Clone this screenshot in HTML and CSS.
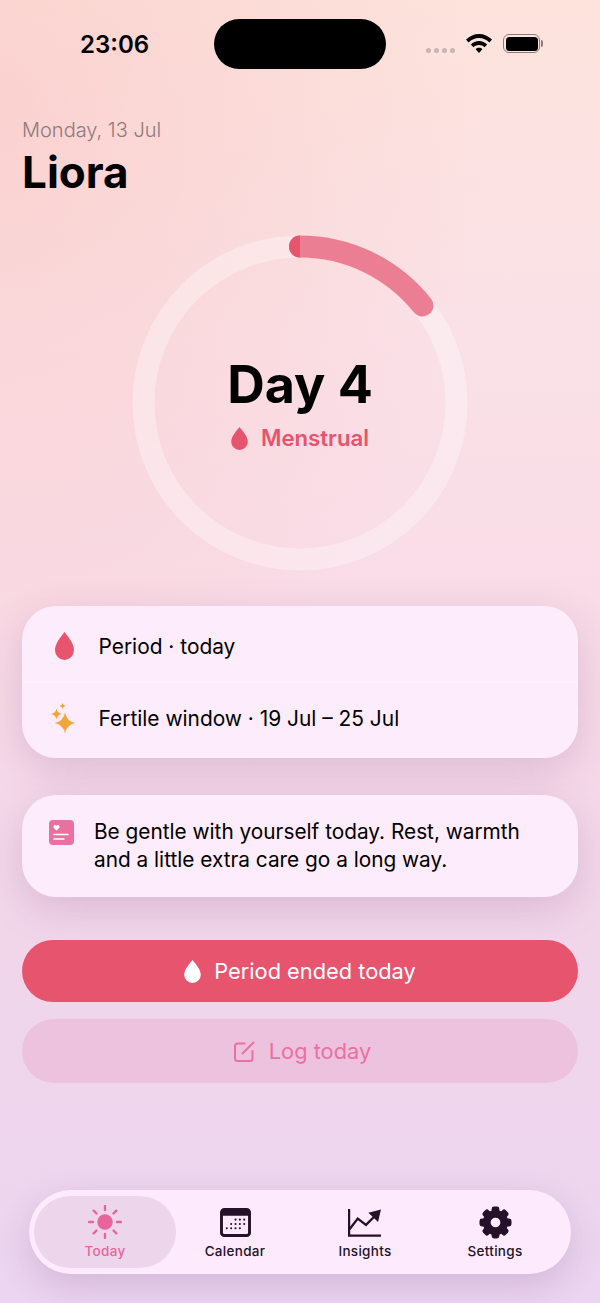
FILE: index.html
```html
<!DOCTYPE html>
<html lang="en">
<head>
<meta charset="utf-8">
<title>Liora</title>
<link rel="stylesheet" href="styles.css">
</head>
<body>
<div class="page">
  <header class="status">
    <span class="time">23:06</span>
    <div class="island"></div>
    <div class="status-icons">
      <div class="signal"><i></i><i></i><i></i><i></i></div>
      <svg class="wifi" viewBox="1.800 3 22.400 15.200" width="26" height="19" preserveAspectRatio="none"><path d="M13 3C8.800 3 5 4.600 1.800 7.400L4 9.700C6.500 7.500 9.600 6.200 13 6.200S19.500 7.500 22 9.700L24.200 7.400C21 4.600 17.200 3 13 3Z"/><path d="M13 8.600C10.300 8.600 7.900 9.600 6 11.300L8.200 13.600C9.500 12.500 11.200 11.800 13 11.800S16.500 12.500 17.800 13.600L20 11.300C18.100 9.600 15.700 8.600 13 8.600Z"/><path d="M13 14C11.900 14 10.900 14.400 10.100 15.100L13 18.200L15.900 15.100C15.100 14.400 14.100 14 13 14Z"/></svg>
      <div class="battery"><div class="battery-body"><div class="battery-fill"></div></div><div class="battery-tip"></div></div>
    </div>
  </header>

  <main class="main">
    <p class="date">Monday, 13 Jul</p>
    <h1 class="name">Liora</h1>

    <section class="ring">
      <svg class="ring-svg" viewBox="0 0 334 334" width="334" height="334">
        <circle cx="167" cy="167" r="156.500" class="ring-track"/>
        <path d="M167 10.500A156.500 156.500 0 0 1 289.400 69.500" class="ring-arc"/>
        <path d="M167 -0.500A11 11 0 0 0 167 21.500Z" class="ring-cap"/>
      </svg>
      <div class="ring-label">
        <div class="day">Day 4</div>
        <div class="phase">
          <svg viewBox="1 1 18 25" width="17" height="23"><path class="fill-rose" d="M10 1C7 5 1 11 1 17a9 9 0 0 0 18 0C19 11 13 5 10 1Z"/></svg>
          <span>Menstrual</span>
        </div>
      </div>
    </section>

    <section class="card card-list">
      <div class="row">
        <span class="row-icon"><svg viewBox="1 1 18 25" width="19" height="28" preserveAspectRatio="none"><path class="fill-rose" d="M10 1C7 5 1 11 1 17a9 9 0 0 0 18 0C19 11 13 5 10 1Z"/></svg></span>
        <span>Period · today</span>
      </div>
      <div class="row row-divided">
        <span class="row-icon"><svg viewBox="0 0 26 31" width="26" height="31"><path class="fill-amber" d="M14 9.500Q15.600 18.400 24.500 20Q15.600 21.600 14 30.500Q12.400 21.600 3.500 20Q12.400 18.400 14 9.500Z"/><path class="fill-amber" d="M5.500 5.500Q6.300 10.200 11 11Q6.300 11.800 5.500 16.500Q4.700 11.800 0 11Q4.700 10.200 5.500 5.500Z"/><path class="fill-amber" d="M11.500 0Q12 2.500 14.500 3Q12 3.500 11.500 6Q11 3.500 8.500 3Q11 2.500 11.500 0Z"/></svg></span>
        <span>Fertile window · 19 Jul – 25 Jul</span>
      </div>
    </section>

    <section class="card card-note">
      <svg class="note-icon" viewBox="0 0 25 25" width="25" height="25">
        <rect width="25" height="25" rx="4" class="fill-pink"/>
        <path d="M7.500 10.500C5.500 9 4.500 8 4.500 6.700C4.500 5.700 5.300 5 6.200 5C6.700 5 7.200 5.300 7.500 5.700C7.800 5.300 8.300 5 8.800 5C9.700 5 10.500 5.700 10.500 6.700C10.500 8 9.500 9 7.500 10.500Z" fill="#fff"/>
        <path d="M5 14.500H19M5 19H15" stroke="#fff" stroke-width="1.500" stroke-linecap="round" fill="none"/>
      </svg>
      <p class="note-text">Be gentle with yourself today. Rest, warmth and a little extra care go a long way.</p>
    </section>

    <button class="btn btn-primary">
      <svg viewBox="1 1 18 25" width="17" height="23"><path fill="#fff" d="M10 1C7 5 1 11 1 17a9 9 0 0 0 18 0C19 11 13 5 10 1Z"/></svg>
      <span>Period ended today</span>
    </button>
    <button class="btn btn-secondary">
      <svg viewBox="0 0 24 24" width="24" height="24" fill="none" class="edit-icon"><path d="M12.500 4.500H5.500A2.500 2.500 0 0 0 3 7V19.500A2.500 2.500 0 0 0 5.500 22H18A2.500 2.500 0 0 0 20.500 19.500V12"/><path d="M10.500 14.500L21.500 3.500"/></svg>
      <span>Log today</span>
    </button>
  </main>

  <nav class="tabbar">
    <a class="tab tab-active">
      <span class="tab-icon"><svg viewBox="0 0 34 34" width="34" height="34" class="sun"><circle cx="17" cy="17" r="7.700"/><g class="rays"><path d="M17 1V5M17 29V33M1 17H5M29 17H33M5.700 5.700L8.500 8.500M25.500 25.500L28.300 28.300M5.700 28.300L8.500 25.500M25.500 8.500L28.300 5.700"/></g></svg></span>
      <span>Today</span>
    </a>
    <a class="tab">
      <span class="tab-icon"><svg viewBox="0 0 32 30" width="31" height="29"><rect x="1.500" y="1.500" width="29" height="27" rx="3" class="cal-frame"/><path d="M1.500 8V4.500a3 3 0 0 1 3-3h23a3 3 0 0 1 3 3V8Z" class="ink"/><g class="ink"><circle cx="16" cy="12" r="1.100"/><circle cx="20.500" cy="12" r="1.100"/><circle cx="25" cy="12" r="1.100"/><circle cx="11.500" cy="16.500" r="1.100"/><circle cx="16" cy="16.500" r="1.100"/><circle cx="20.500" cy="16.500" r="1.100"/><circle cx="25" cy="16.500" r="1.100"/><circle cx="7" cy="21" r="1.100"/><circle cx="11.500" cy="21" r="1.100"/><circle cx="16" cy="21" r="1.100"/><circle cx="20.500" cy="21" r="1.100"/></g></svg></span>
      <span>Calendar</span>
    </a>
    <a class="tab">
      <span class="tab-icon"><svg viewBox="1 0 35 30" width="34" height="29" fill="none"><path d="M2 1V28.500H35" class="chart-line"/><path d="M2.500 22L11 11L19.500 17.500L28 9" class="chart-line"/><path class="ink" d="M22 5L35 1.500L32 14.500Z"/></svg></span>
      <span>Insights</span>
    </a>
    <a class="tab">
      <span class="tab-icon"><svg viewBox="0 0 34 34" width="33" height="33"><g class="ink"><rect x="13" y="0.500" width="8" height="33" rx="2.500"/><rect x="13" y="0.500" width="8" height="33" rx="2.500" transform="rotate(45 17 17)"/><rect x="13" y="0.500" width="8" height="33" rx="2.500" transform="rotate(90 17 17)"/><rect x="13" y="0.500" width="8" height="33" rx="2.500" transform="rotate(135 17 17)"/></g><circle cx="17" cy="17" r="9" class="gear-ring"/></svg></span>
      <span>Settings</span>
    </a>
  </nav>
</div>
</body>
</html>
```
FILE: styles.css
```css
* { box-sizing: border-box; }
html, body { margin: 0; padding: 0; }
body { font-family: Inter, "Liberation Sans", sans-serif; color: #000; }

.page {
  width: 600px;
  height: 1303px;
  display: flex;
  flex-direction: column;
  overflow: hidden;
  background:
    radial-gradient(ellipse 480px 640px at 0 120px, rgba(249, 200, 198, .6), rgba(249, 200, 198, 0)),
    linear-gradient(180deg, #fde3dc 0%, #fae1e7 25%, #f9dce7 45%, #f1d6ea 72%, #ebd5f0 100%);
}

/* status bar */
.status {
  height: 50px;
  margin-top: 19px;
  padding: 0 56px 0 80px;
  display: flex;
  align-items: center;
  flex: none;
}
.time { width: 134px; font-size: 24px; font-weight: 600; }
.island { width: 172px; height: 50px; border-radius: 25px; background: #000; flex: none; }
.status-icons { margin-left: 40px; display: flex; align-items: center; padding-bottom: 1px; }
.signal { display: flex; gap: 3px; margin-top: 14px; margin-right: 11px; }
.signal i { width: 5px; height: 5px; border-radius: 50%; background: #c9b4b4; }
.wifi { fill: #000; margin-right: 11px; }
.battery { display: flex; align-items: center; }
.battery-body { width: 37px; height: 19px; border: 1.500px solid #8f7a7a; border-radius: 6px; padding: 1.500px; }
.battery-fill { width: 100%; height: 100%; background: #000; border-radius: 3.500px; }
.battery-tip { width: 2px; height: 7px; background: #8f7a7a; border-radius: 0 2px 2px 0; margin-left: 1px; }

/* main column */
.main { padding: 0 22px; display: flex; flex-direction: column; flex: none; }
.date { margin: 49px 0 0; font-size: 20px; line-height: 24px; font-weight: 300; color: #8c7a7e; }
.name { margin: 5px 0 0; font-size: 44px; line-height: 50px; font-weight: 700; }

.ring {
  position: relative;
  width: 334px;
  height: 334px;
  margin: 39px auto 0;
}
.ring-svg { display: block; overflow: visible; }
.ring-track { fill: none; stroke: rgba(255, 255, 255, .32); stroke-width: 22; }
.ring-arc { fill: none; stroke: #ec7e93; stroke-width: 22; stroke-linecap: round; }
.ring-cap { fill: #e7546e; }
.ring-label {
  position: absolute;
  inset: 0;
  display: flex;
  flex-direction: column;
  align-items: center;
  padding-top: 119px;
}
.day { font-size: 52px; line-height: 60px; font-weight: 700; }
.phase { display: flex; align-items: center; gap: 13px; margin-top: 9px; color: #e7546e; font-size: 22.200px; line-height: 28px; font-weight: 600; }
.fill-rose { fill: #e7546e; }
.fill-amber { fill: #f2a53c; }
.fill-pink { fill: #ea70a0; }

/* cards */
.card {
  background: #fdecfb;
  box-shadow: 0 12px 40px rgba(125, 65, 125, .2);
  border-radius: 34px;
}
.card-list { margin-top: 36px; height: 152px; padding: 4px 0; font-size: 20.900px; }
.row { height: 72px; display: flex; align-items: center; padding-left: 28px; }
.row-divided { border-top: 1px solid rgba(255, 255, 255, .25); }
.row-icon { width: 28px; margin-right: 20.500px; display: flex; justify-content: center; }
.card-note { margin-top: 37px; height: 102px; display: flex; padding: 25px 28px 0 27px; gap: 20px; }
.note-icon { flex: none; }
.note-text { margin: -2px 0 0; font-size: 20.800px; line-height: 28px; }

/* buttons */
.btn {
  width: 556px;
  border: 0;
  padding: 0;
  font-family: inherit;
  font-size: 21.800px;
  display: flex;
  align-items: center;
  justify-content: center;
  flex: none;
}
.btn-primary { height: 62px; margin-top: 43px; border-radius: 31px; background: #e7546e; color: #fff; gap: 13px; }
.btn-secondary { height: 64px; margin-top: 17px; border-radius: 32px; background: #edc2df; color: #ea70a0; gap: 13px; padding-left: 3px; }
.edit-icon path { stroke: #ea70a0; stroke-width: 2; stroke-linecap: round; }

/* tab bar */
.tabbar {
  margin: auto 29px 29px;
  height: 84px;
  flex: none;
  border-radius: 42px;
  background: #fdebfd;
  box-shadow: 0 12px 34px rgba(120, 70, 130, .2);
  display: flex;
  align-items: stretch;
  padding: 6px 12px 6px 5px;
}
.tab {
  flex: none;
  width: 130px;
  display: flex;
  flex-direction: column;
  align-items: center;
  padding-top: 8px;
  font-size: 13.500px;
  line-height: 16px;
  font-weight: 500;
  letter-spacing: .3px;
  color: #24122a;
}
.tab-icon { height: 36px; margin-bottom: 3px; display: flex; align-items: center; }
.tab-active { width: 142px; margin-right: -6px; border-radius: 36px; background: #edd6ec; color: #e8649a; }
.sun circle { fill: #e8649a; }
.rays path { stroke: #e8649a; stroke-width: 2.400; stroke-linecap: round; fill: none; }
.ink { fill: #24122a; }
.cal-frame { fill: #fdebfd; stroke: #24122a; stroke-width: 3; }
.chart-line { stroke: #24122a; stroke-width: 2.400; fill: none; }
.gear-ring { fill: #fdebfd; stroke: #24122a; stroke-width: 8; }
```
